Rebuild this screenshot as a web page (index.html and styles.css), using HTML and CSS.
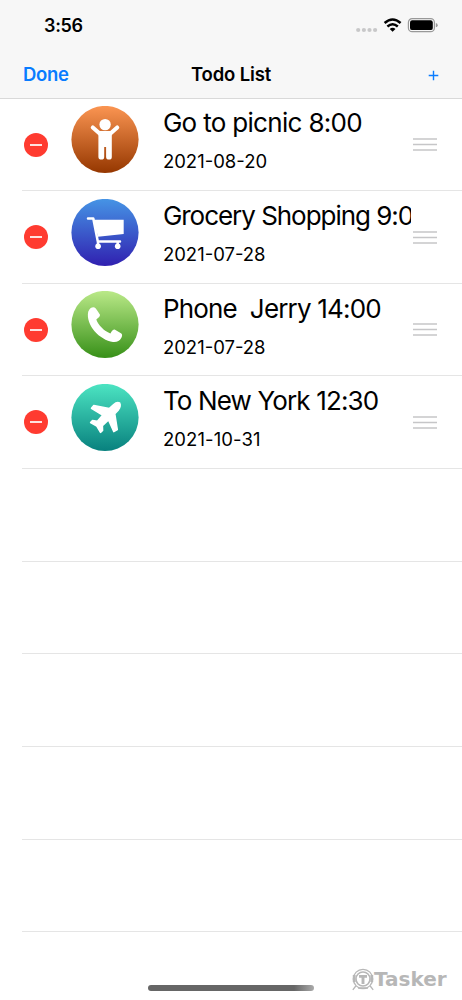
FILE: index.html
```html
<!DOCTYPE html>
<html lang="en">
<head>
<meta charset="utf-8">
<title>Todo List</title>
<link rel="stylesheet" href="styles.css">
</head>
<body>
<div class="screen">
  <header class="header">
    <div class="status">
      <span class="time">3:56</span>
      <svg class="indicators" width="84" height="20" viewBox="0 0 84 20">
        <g fill="#c8c8c9"><circle cx="3.2" cy="14" r="2.1"/><circle cx="8.9" cy="14" r="2.1"/><circle cx="14.5" cy="14" r="2.1"/><circle cx="20.1" cy="14" r="2.1"/></g>
        <g fill="none" stroke="#000" stroke-width="2.5"><path d="M29.6 7Q37.6 -.1 45.6 7"/><path d="M32.4 10.5Q37.6 6 42.8 10.5"/></g>
        <path d="M34.7 12.9Q37.6 10.7 40.5 12.9L37.6 15.8Z"/>
        <rect x="53.4" y="2.7" width="26" height="13" rx="3.7" fill="none" stroke="#999" stroke-width="1.2"/>
        <rect x="55" y="4.3" width="22.8" height="9.8" rx="2.2"/>
        <path d="M80.8 7.1Q82.7 7.4 82.7 9.2T80.8 11.3Z" fill="#999"/>
      </svg>
    </div>
    <nav class="nav">
      <span class="done">Done</span>
      <h1 class="heading">Todo List</h1>
      <svg class="add" width="11" height="11" viewBox="0 0 11 11"><path d="M5.5 .7V10.3M.7 5.5H10.3" stroke="#0a7cff" stroke-width="1.4"/></svg>
    </nav>
  </header>
  <main class="list">
    <section class="row">
      <svg class="remove" width="24" height="24" viewBox="0 0 24 24"><circle cx="12" cy="12" r="12" fill="#ff3b30"/><path d="M6 12H18" stroke="#fff" stroke-width="1.7"/></svg>
      <svg class="badge" width="68" height="68" viewBox="0 0 68 68">
        <defs><linearGradient id="orange" x2="0" y2="1"><stop stop-color="#fb9552"/><stop offset="1" stop-color="#953700"/></linearGradient></defs>
        <circle cx="34" cy="33.5" r="33.6" fill="url(#orange)"/>
        <circle cx="34.1" cy="18.6" r="5.7" fill="#fff"/>
        <path d="M21.8 21.5L29.5 28.3M46.2 21.5L38.6 28.3" stroke="#fff" stroke-width="4.1" stroke-linecap="round"/>
        <path d="M28.7 25H39.4Q40.8 25 40.8 27V51Q40.8 53.6 38 53.6T35.1 51V41H33.2V51Q33.2 53.6 30.4 53.6T27.4 51V27Q27.4 25 28.7 25Z" fill="#fff"/>
      </svg>
      <div class="copy"><h2 class="title picnic">Go to picnic 8:00</h2><p class="date">2021-08-20</p></div>
      <svg class="handle" width="24" height="13" viewBox="0 0 24 13"><path d="M0 1H24M0 6.5H24M0 12H24" stroke="#c6c6c8" stroke-width="1.5"/></svg>
    </section>
    <section class="row">
      <svg class="remove" width="24" height="24" viewBox="0 0 24 24"><circle cx="12" cy="12" r="12" fill="#ff3b30"/><path d="M6 12H18" stroke="#fff" stroke-width="1.7"/></svg>
      <svg class="badge" width="68" height="68" viewBox="0 0 68 68">
        <defs><linearGradient id="blue" x2="0" y2="1"><stop stop-color="#4694e5"/><stop offset="1" stop-color="#3020b0"/></linearGradient></defs>
        <circle cx="34" cy="33.5" r="33.6" fill="url(#blue)"/>
        <path d="M17 19.6H22.3L26.8 42.4H49" fill="none" stroke="#fff" stroke-width="2.5" stroke-linecap="round" stroke-linejoin="round"/>
        <path d="M22.5 20.8H52.7V35L27 37.7Z" fill="#fff"/>
        <path d="M27 43V47M46.7 43V47" stroke="#fff" stroke-width="2.5"/>
        <circle cx="27.1" cy="47.2" r="2.8" fill="#fff"/><circle cx="46.7" cy="47.2" r="2.8" fill="#fff"/>
      </svg>
      <div class="copy"><h2 class="title grocery">Grocery Shopping 9:00</h2><p class="date">2021-07-28</p></div>
      <svg class="handle" width="24" height="13" viewBox="0 0 24 13"><path d="M0 1H24M0 6.5H24M0 12H24" stroke="#c6c6c8" stroke-width="1.5"/></svg>
    </section>
    <section class="row">
      <svg class="remove" width="24" height="24" viewBox="0 0 24 24"><circle cx="12" cy="12" r="12" fill="#ff3b30"/><path d="M6 12H18" stroke="#fff" stroke-width="1.7"/></svg>
      <svg class="badge" width="68" height="68" viewBox="0 0 68 68">
        <defs><linearGradient id="green" x2="0" y2="1"><stop stop-color="#bae988"/><stop offset="1" stop-color="#379018"/></linearGradient></defs>
        <circle cx="34" cy="33.5" r="33.6" fill="url(#green)"/>
        <path d="M17.2 20.8Q19.2 15.8 23.5 16.4Q24.8 16.8 29 23.8Q29.2 25.7 25.3 28.5C27.4 34.2 32.8 39.8 39.4 42.5Q41.5 38.2 43.6 38.4L50 42.2Q52 43.4 50.4 46.7Q47.7 51.6 42 51C28.8 49.3 14.4 34 17.2 20.8Z" fill="#fff"/>
      </svg>
      <div class="copy"><h2 class="title phone">Phone&nbsp; Jerry 14:00</h2><p class="date">2021-07-28</p></div>
      <svg class="handle" width="24" height="13" viewBox="0 0 24 13"><path d="M0 1H24M0 6.5H24M0 12H24" stroke="#c6c6c8" stroke-width="1.5"/></svg>
    </section>
    <section class="row">
      <svg class="remove" width="24" height="24" viewBox="0 0 24 24"><circle cx="12" cy="12" r="12" fill="#ff3b30"/><path d="M6 12H18" stroke="#fff" stroke-width="1.7"/></svg>
      <svg class="badge" width="68" height="68" viewBox="0 0 68 68">
        <defs><linearGradient id="teal" x2="0" y2="1"><stop stop-color="#4ce4c2"/><stop offset="1" stop-color="#08817e"/></linearGradient></defs>
        <circle cx="34" cy="33.5" r="33.6" fill="url(#teal)"/>
        <path d="M48.6 18.9Q46 17.4 42.4 20.7L38.2 24.5L22.8 21.5L20.5 24.3L31.6 31.2L26.4 37.2L21.5 36.5L19.6 38.6L25.8 42.2L29.5 48.4L31.6 46.5L31.4 41.6L37.5 36L42.8 47.6L46.3 45.5L43.8 29.8L47.4 25.9Q50.3 22 48.6 18.9Z" fill="#fff" stroke="#fff" stroke-width="1.5" stroke-linejoin="round"/>
      </svg>
      <div class="copy"><h2 class="title travel">To New York 12:30</h2><p class="date october">2021-10-31</p></div>
      <svg class="handle" width="24" height="13" viewBox="0 0 24 13"><path d="M0 1H24M0 6.5H24M0 12H24" stroke="#c6c6c8" stroke-width="1.5"/></svg>
    </section>
    <div class="row"></div><div class="row"></div><div class="row"></div><div class="row"></div><div class="row"></div>
  </main>
  <footer class="footer">
    <div class="home"></div>
    <div class="brand">
      <svg width="22" height="23" viewBox="0 0 22 23" fill="none" stroke="#b7b7b7">
        <circle cx="11" cy="11" r="9.7" stroke-width="1.3"/><circle cx="11" cy="11" r="7" stroke-width="1.6"/>
        <path d="M7 8.4H15M11 8.4V16" stroke-width="2.9"/><path d="M2.2 7V14M19.8 7V14" stroke-width="2.8"/>
        <path d="M3.8 18L.8 21.8M18.2 18L21.2 21.8M6 20H16" stroke-width="1.3"/>
      </svg><span>Tasker</span>
    </div>
  </footer>
</div>
</body>
</html>
```
FILE: styles.css
```css
* { box-sizing: border-box; }
body { margin: 0; background: #fff; color: #000; font-family: Inter, "Liberation Sans", sans-serif; }
h1, h2, p { margin: 0; font-weight: 400; }
svg { display: block; flex: none; }
.screen { width: 462px; height: 1000px; overflow: hidden; display: flex; flex-direction: column; }
.header { height: 98.5px; flex: none; background: #f7f7f7; border-bottom: 1px solid #d9d9d9; }
.status { height: 50px; display: flex; justify-content: space-between; padding: 16px 23px 0 44px; }
.time { font-size: 18px; line-height: 20px; font-weight: 600; letter-spacing: -.3px; }
.nav { height: 48px; display: grid; grid-template-columns: 1fr auto 1fr; align-items: center; padding: 0 23px; }
.done { color: #087cff; font-size: 18.5px; font-weight: 600; letter-spacing: -.3px; }
.heading { font-size: 18.5px; font-weight: 600; letter-spacing: -.15px; }
.add { justify-self: end; margin-top: 3px; }
.list { flex: none; }
.row { height: 92.65px; margin-left: 22.4px; border-bottom: 1px solid #e5e5e5; display: flex; align-items: flex-start; }
.remove { margin: 34px 23px 0 1.5px; }
.badge { margin-top: 7.5px; }
.copy { width: 248px; margin-left: 24px; padding-top: 7.8px; overflow: hidden; white-space: nowrap; flex: none; }
.title { font-size: 26px; line-height: 34px; }
.picnic { letter-spacing: -.68px; }
.grocery { letter-spacing: -1.03px; }
.phone { letter-spacing: -.82px; }
.travel { letter-spacing: -.85px; }
.date { font-size: 18.5px; line-height: 24px; margin-top: 9px; }
.october { letter-spacing: .1px; }
.handle { margin: 39.5px 0 0 2px; }
.footer { flex: 1; display: flex; align-items: flex-start; padding-top: 35px; }
.home { width: 166px; height: 6px; margin: 18px 38px 0 148px; border-radius: 3px; background: linear-gradient(90deg, #666 88%, #aaa); flex: none; }
.brand { display: flex; align-items: center; color: #b7b7b7; font: 700 20px "DejaVu Sans", sans-serif; }
```
